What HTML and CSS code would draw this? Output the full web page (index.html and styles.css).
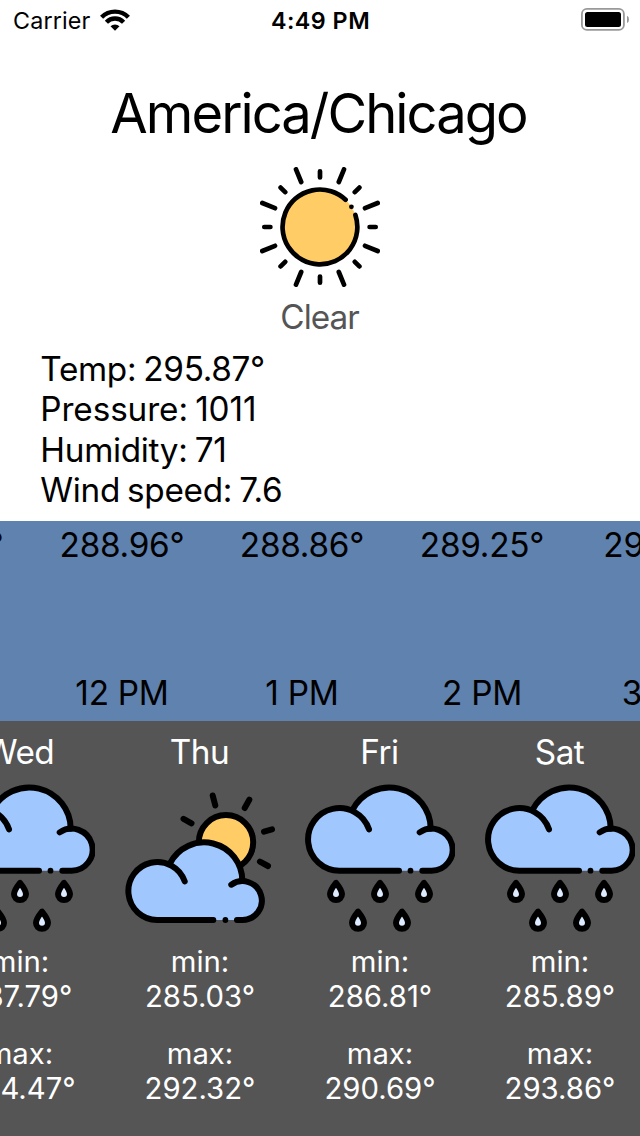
FILE: index.html
```
<!DOCTYPE html>
<html lang="en">
<head>
<meta charset="utf-8">
<title>Weather</title>
<link rel="stylesheet" href="styles.css">
</head>
<body>
<svg class="defs" width="0" height="0" aria-hidden="true">
  <symbol id="drop" viewBox="0 0 18 24" overflow="visible">
    <path d="M9 3.6C9 3.6 3 11 3 14.8a6 6 0 0 0 12 0C15 11 9 3.6 9 3.6Z" fill="#dcebff" stroke="#000" stroke-width="6" stroke-linejoin="round"/>
  </symbol>
  <symbol id="rain" viewBox="0 0 150 150">
    <path d="M34.5 87.7A31.35 31.35 0 1 1 46.7 27.4A41.4 41.4 0 0 1 125.7 45.7A21 21 0 0 1 126 87.7Z" fill="#a0c8ff"/>
    <g fill="none" stroke="#000" stroke-width="6" stroke-linecap="round">
      <path d="M64 46.3A31.3 31.3 0 1 0 34.5 87.7H94"/>
      <path d="M47.5 26.9A41.4 41.4 0 0 1 125.7 45.7"/>
      <path d="M114.7 49.4A21 21 0 1 1 126 87.7H117.3"/>
    </g>
    <circle cx="105.5" cy="87.7" r="2.9"/>
    <use href="#drop" x="22" y="96.3" width="18" height="24"/>
    <use href="#drop" x="66" y="96.3" width="18" height="24"/>
    <use href="#drop" x="110" y="96.3" width="18" height="24"/>
    <use href="#drop" x="44" y="125" width="18" height="24"/>
    <use href="#drop" x="88" y="125" width="18" height="24"/>
  </symbol>
  <symbol id="partly" viewBox="0 0 150 150">
    <circle cx="101" cy="59.3" r="27.2" fill="#ffcc66" stroke="#000" stroke-width="6"/>
    <path d="M32 137A29 29 0 1 1 44.3 81.7A38.2 38.2 0 0 1 117.3 98.3A19.4 19.4 0 0 1 117.3 137Z" fill="#a0c8ff"/>
    <g fill="none" stroke="#000" stroke-width="6" stroke-linecap="round">
      <path d="M59.7 98.3A29 29 0 1 0 32 137H88.3"/>
      <path d="M45 80.4A38.2 38.2 0 0 1 117.3 98"/>
      <path d="M106.3 101.7A19.4 19.4 0 1 1 117.3 137H112"/>
      <path d="M87.7 12.5L90.3 22.5M124.3 16.7L119.7 25M58.5 35.8L66.5 40.3M139 48.6L147 46.4M134.9 78.6L143 83"/>
    </g>
    <circle cx="100.4" cy="137" r="2.9"/>
  </symbol>
</svg>

<header class="status">
  <div class="carrier">
    <span>Carrier</span>
    <svg class="wifi" viewBox="0 0 30 22">
      <g fill="none" stroke="#000" stroke-width="4.4">
        <path d="M1.6 8.2A18.9 18.9 0 0 1 28.4 8.2"/>
        <path d="M6.4 13.2A11.9 11.9 0 0 1 23.6 13.2"/>
      </g>
      <path d="M15 21.8L10.5 17.3A6.4 6.4 0 0 1 19.5 17.3Z"/>
    </svg>
  </div>
  <div class="clock">4:49 PM</div>
  <svg class="battery" viewBox="0 0 48 23">
    <rect x=".9" y=".9" width="42" height="21" rx="5" fill="#fff" stroke="#999" stroke-width="1.8"/>
    <rect x="4" y="3.9" width="36" height="15" rx="2.5"/>
    <path d="M46 7.8Q48 8.6 48 11.4T46 15Z" fill="#999"/>
  </svg>
</header>

<main class="current">
  <h1 class="place">America/Chicago</h1>
  <svg class="sun" viewBox="0 0 120 120">
    <circle cx="60" cy="60" r="37.4" fill="#ffcc66"/>
    <g fill="none" stroke="#000" stroke-width="4.7" stroke-linecap="round">
      <path d="M95.4 48A37.4 37.4 0 1 1 85.6 32.7"/>
      <path d="M60 4.3V10.4M60 109.6V115.7M4.3 60H10.4M109.6 60H115.7"/>
      <path d="M20.6 20.6L25.2 25.2M99.4 20.6L94.8 25.2M20.6 99.4L25.2 94.8M99.4 99.4L94.8 94.8"/>
      <path d="M36 2.3L41.2 15M84 2.3L78.8 15M36 117.7L41.2 105M84 117.7L78.8 105M2.3 36L15 41.2M2.3 84L15 78.8M117.7 36L105 41.2M117.7 84L105 78.8"/>
    </g>
    <circle cx="91.4" cy="39.8" r="2.4"/>
  </svg>
  <p class="condition">Clear</p>
  <ul class="details">
    <li>Temp: 295.87°</li>
    <li class="loose">Pressure: 1011</li>
    <li>Humidity: 71</li>
    <li>Wind speed: 7.6</li>
  </ul>
</main>

<section class="hourly">
  <div class="hour"><span>289.27°</span><span>11 AM</span></div>
  <div class="hour"><span>288.96°</span><span>12 PM</span></div>
  <div class="hour"><span>288.86°</span><span>1 PM</span></div>
  <div class="hour"><span>289.25°</span><span>2 PM</span></div>
  <div class="hour"><span>290.31°</span><span>3 PM</span></div>
</section>

<section class="daily">
  <article class="day">
    <h2 class="name">Wed</h2>
    <svg class="icon"><use href="#rain"/></svg>
    <p class="range">min:<br>287.79°</p>
    <p class="range">max:<br>294.47°</p>
  </article>
  <article class="day">
    <h2 class="name">Thu</h2>
    <svg class="icon"><use href="#partly"/></svg>
    <p class="range">min:<br>285.03°</p>
    <p class="range">max:<br>292.32°</p>
  </article>
  <article class="day">
    <h2 class="name">Fri</h2>
    <svg class="icon"><use href="#rain"/></svg>
    <p class="range">min:<br>286.81°</p>
    <p class="range">max:<br>290.69°</p>
  </article>
  <article class="day">
    <h2 class="name">Sat</h2>
    <svg class="icon"><use href="#rain"/></svg>
    <p class="range">min:<br>285.89°</p>
    <p class="range">max:<br>293.86°</p>
  </article>
</section>
</body>
</html>
```

FILE: styles.css
```
* { box-sizing: border-box; margin: 0; padding: 0; }

body {
  width: 640px;
  height: 1136px;
  overflow: hidden;
  display: flex;
  flex-direction: column;
  background: #fff;
  color: #000;
  font-family: Inter, "Liberation Sans", sans-serif;
  font-size: 33.3px;
}

.defs { position: absolute; }
h1, h2 { font-weight: 400; }

.status {
  height: 40px;
  flex: none;
  display: grid;
  grid-template-columns: 1fr auto 1fr;
  padding: 0 11px 0 13px;
  font-size: 23.3px;
  line-height: 42px;
}
.carrier { display: flex; gap: 10px; letter-spacing: .15px; }
.wifi { width: 30px; height: 22px; margin-top: 9px; }
.clock { font-weight: 600; letter-spacing: .5px; text-indent: -1px; }
.battery { width: 48px; height: 23px; margin-top: 8px; justify-self: end; }

.current {
  height: 481px;
  flex: none;
  display: flex;
  flex-direction: column;
  align-items: center;
  padding-top: 40px;
}
.place {
  font-size: 54.3px;
  line-height: 67px;
  height: 67px;
  letter-spacing: -1.95px;
  text-indent: -3px;
}
.sun { width: 120px; height: 120px; margin-top: 20px; }
.condition { margin-top: 10px; line-height: 40px; color: #555; letter-spacing: -1px; text-indent: -1px; }
.details {
  align-self: stretch;
  list-style: none;
  margin-top: 12px;
  padding-left: 40.3px;
  line-height: 40.4px;
  letter-spacing: -.3px;
  word-spacing: -2px;
}
.details .loose { letter-spacing: -.1px; }

.hourly {
  height: 200px;
  flex: none;
  display: flex;
  margin-left: -148px;
  background: #6082af;
  overflow: hidden;
}
.hour {
  width: 180px;
  flex: none;
  display: flex;
  flex-direction: column;
  justify-content: space-between;
  align-items: center;
  padding: 4px 0 8px;
  line-height: 40px;
  letter-spacing: -.25px;
}

.daily {
  flex: 1;
  display: flex;
  margin-left: -70px;
  background: #555;
  color: #fff;
}
.day {
  width: 180px;
  flex: none;
  display: flex;
  flex-direction: column;
  align-items: center;
  padding-top: 11px;
}
.name { line-height: 40px; height: 40px; font-size: 33.3px; letter-spacing: -.5px; text-indent: -1px; }
.icon { width: 150px; height: 150px; margin-top: 11px; }
.range {
  margin-top: 11px;
  font-size: 29.3px;
  line-height: 35px;
  text-align: center;
}
.range + .range { margin-top: 22px; }
```
